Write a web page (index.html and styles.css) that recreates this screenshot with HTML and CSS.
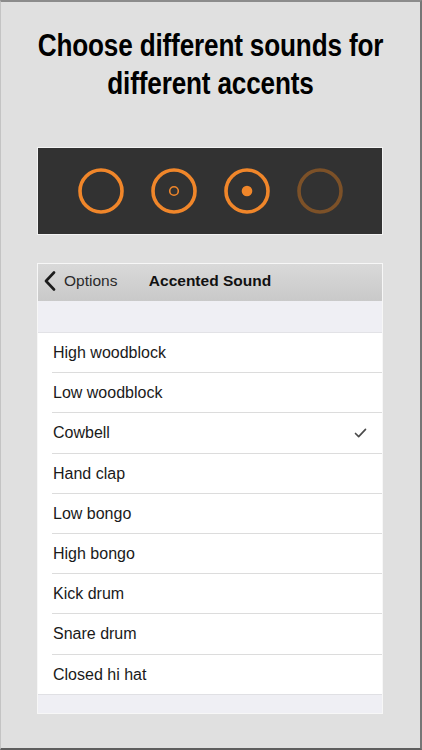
FILE: index.html
```html
<!DOCTYPE html>
<html>
<head>
<meta charset="utf-8">
<link rel="stylesheet" href="styles.css">
</head>
<body>
<div class="screen">
  <h1 class="headline"><span class="line">Choose different sounds for</span><span class="line">different accents</span></h1>

  <div class="accents">
    <svg class="accent" viewBox="0 0 46 46"><circle cx="23" cy="23" r="21" fill="none" stroke="#f0862a" stroke-width="3.6"/></svg>
    <svg class="accent" viewBox="0 0 46 46"><circle cx="23" cy="23" r="21" fill="none" stroke="#f0862a" stroke-width="3.6"/><circle cx="23" cy="23" r="4.3" fill="none" stroke="#f0862a" stroke-width="1.6"/></svg>
    <svg class="accent" viewBox="0 0 46 46"><circle cx="23" cy="23" r="21" fill="none" stroke="#f0862a" stroke-width="3.6"/><circle cx="23" cy="23" r="5.3" fill="#f0862a"/></svg>
    <svg class="accent" viewBox="0 0 46 46"><circle cx="23" cy="23" r="21" fill="none" stroke="#7c5128" stroke-width="3.6"/></svg>
  </div>

  <div class="settings">
    <div class="navbar">
      <div class="back">
        <svg class="chevron" viewBox="0 0 12 20"><path d="M10 1.5 L2 10 L10 18.5" fill="none" stroke="#1c1c1c" stroke-width="2.6" stroke-linecap="round" stroke-linejoin="round"/></svg>
        <span>Options</span>
      </div>
      <div class="nav-title">Accented Sound</div>
      <div></div>
    </div>
    <div class="section-gap"></div>
    <ul class="list">
      <li class="row">High woodblock</li>
      <li class="row">Low woodblock</li>
      <li class="row">Cowbell<svg class="check" viewBox="0 0 14 11"><path d="M1.5 6 L5 9.5 L12.5 1.5" fill="none" stroke="#4a4a4a" stroke-width="1.8" stroke-linecap="round" stroke-linejoin="round"/></svg></li>
      <li class="row">Hand clap</li>
      <li class="row">Low bongo</li>
      <li class="row">High bongo</li>
      <li class="row">Kick drum</li>
      <li class="row">Snare drum</li>
      <li class="row last">Closed hi hat</li>
    </ul>
    <div class="footer-gap"></div>
  </div>
</div>
</body>
</html>
```
FILE: styles.css
```css
html, body {
  margin: 0;
  padding: 0;
}
body {
  width: 422px;
  height: 750px;
  overflow: hidden;
  background: #e0e0e0;
}
.screen {
  box-sizing: border-box;
  width: 422px;
  height: 750px;
  background: #e0e0e0;
  border-top: 2px solid #8c8c8c;
  border-right: 2px solid #767676;
  border-bottom: 2px solid #5e5e5e;
  border-left: 1px solid #c4c4c4;
  display: flex;
  flex-direction: column;
  align-items: center;
}
.headline {
  align-self: stretch;
  margin: 24px 0 0 0;
  font-family: "Liberation Sans", Arial, sans-serif;
  font-weight: bold;
  font-size: 31.5px;
  line-height: 38px;
  text-align: center;
  color: #000;
  letter-spacing: -0.2px;
}
.line {
  display: block;
  white-space: nowrap;
  transform: scaleX(0.83);
}
.accents {
  margin-top: 45px;
  box-sizing: border-box;
  width: 346px;
  height: 88px;
  background: #323232;
  border: 1px solid #f3f3f3;
  display: flex;
  justify-content: center;
  align-items: center;
  gap: 27px;
  margin-left: -1px;
}
.accent {
  width: 46px;
  height: 46px;
  display: block;
}
.settings {
  margin-top: 28px;
  margin-left: -1px;
  box-sizing: border-box;
  width: 346px;
  border: 1px solid #f7f7f7;
  background: #fff;
  font-family: "Liberation Sans", Arial, sans-serif;
  color: #1a1a1a;
}
.navbar {
  box-sizing: border-box;
  height: 37px;
  padding-bottom: 3px;
  background: linear-gradient(#d9d9d9, #c9c9c9);
  display: grid;
  grid-template-columns: 1fr auto 1fr;
  align-items: center;
  font-size: 15.5px;
}
.back {
  display: flex;
  align-items: center;
  padding-left: 6px;
  color: #2a2a2a;
}
.chevron {
  width: 12px;
  height: 20px;
  margin-right: 8px;
}
.nav-title {
  font-weight: bold;
  color: #111;
}
.section-gap {
  height: 32px;
  background: #efeff4;
  border-bottom: 1px solid #e2e2e6;
  box-sizing: border-box;
}
.list {
  list-style: none;
  margin: 0;
  padding: 0;
}
.row {
  position: relative;
  box-sizing: border-box;
  height: 40.2px;
  padding-left: 15px;
  padding-right: 15px;
  display: flex;
  align-items: center;
  justify-content: space-between;
  font-size: 16px;
}
.row::after {
  content: "";
  position: absolute;
  left: 14px;
  right: 0;
  bottom: 0;
  height: 1px;
  background: #dcdcdc;
}
.row.last::after {
  left: 0;
  background: #e0e0e4;
}
.check {
  width: 13px;
  height: 10px;
  margin-right: 0;
}
.footer-gap {
  height: 18px;
  background: #efeff4;
}
```
